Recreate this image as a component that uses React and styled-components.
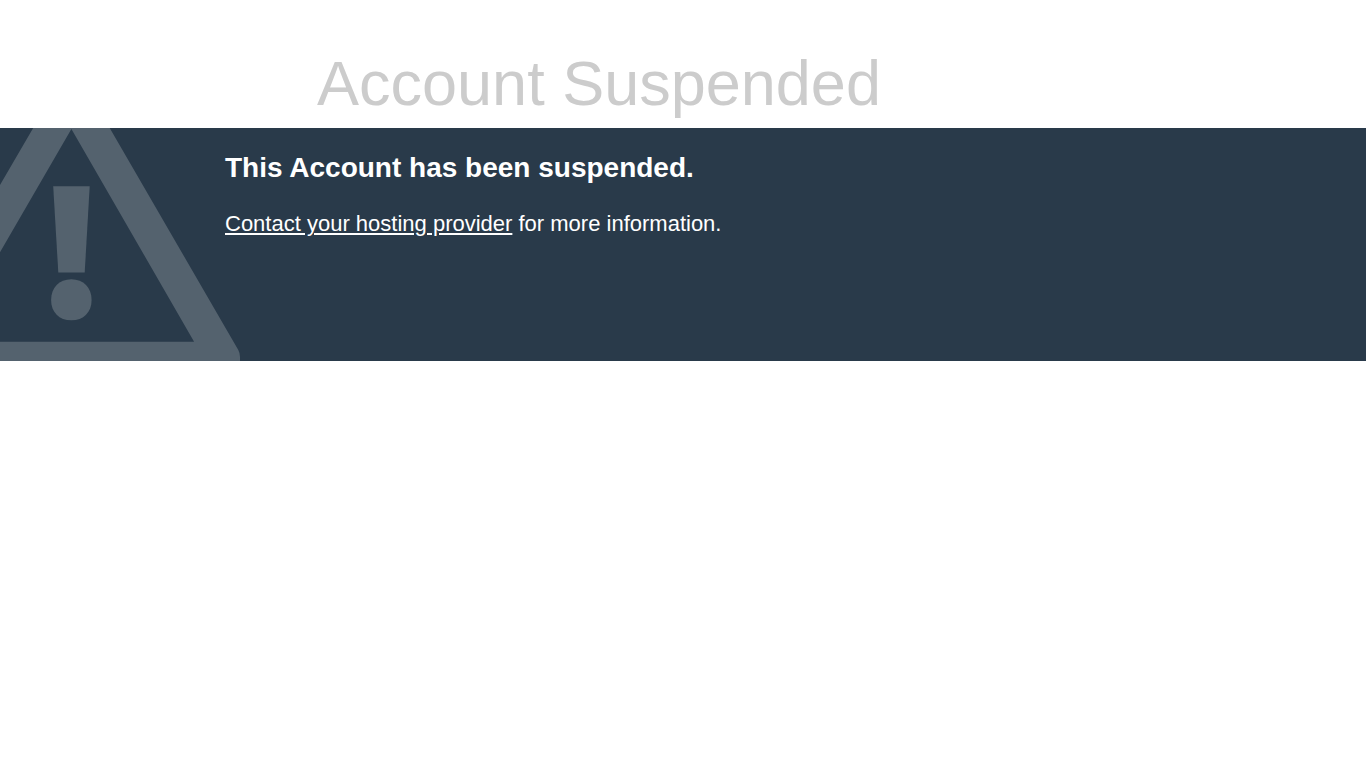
import React from "react";
import styled, { createGlobalStyle } from "styled-components";

const GlobalStyle = createGlobalStyle`
  body {
    margin: 0;
    background: #fff;
    color: #ccc;
    font-family: "Liberation Sans", Arial, sans-serif;
  }
`;

const Header = styled.header`
  padding: 48px 40px 10px 317px;
`;

const Title = styled.h1`
  margin: 0;
  font-size: 63px;
  line-height: 70px;
  font-weight: 400;
  color: #ccc;
`;

const Banner = styled.main`
  position: relative;
  overflow: hidden;
  min-height: 233px;
  box-sizing: border-box;
  padding: 24px 40px 24px 225px;
  background: #293a4a;
  color: #fff;
`;

const WarningIcon = styled.svg`
  position: absolute;
  left: 0;
  top: 0;
  width: 240px;
  height: 233px;
  fill: #54626e;
`;

const Heading = styled.h2`
  margin: 0 0 28px;
  font-size: 28px;
  line-height: 32px;
  font-weight: 700;
`;

const Message = styled.p`
  margin: 0;
  font-size: 22px;
  line-height: 24px;
`;

const ContactLink = styled.a`
  color: inherit;
  text-decoration: underline;
`;

export default function App() {
  return (
    <>
      <GlobalStyle />
      <Header>
        <Title>Account Suspended</Title>
      </Header>
      <Banner>
        <WarningIcon viewBox="0 0 240 233" aria-hidden="true">
          <path d="M33.2 0H109.7L238.300 222Q240 225 240 229V233H0V213.700H194.100L71.400 1L0 124.200V57Z" />
          <path d="M53.2 58.200H89.700L84.700 144.600H58.300Z" />
          <path d="M71.300 151.300C83.500 151.300 91.600 159.700 91.600 171.900C91.600 184.200 83.500 192.300 71.300 192.300C59.200 192.300 51.100 184.200 51.100 171.900C51.100 159.700 59.200 151.300 71.300 151.300Z" />
        </WarningIcon>
        <Heading>This Account has been suspended.</Heading>
        <Message>
          <ContactLink href="#contact">Contact your hosting provider</ContactLink>{" "}
          for more information.
        </Message>
      </Banner>
    </>
  );
}
